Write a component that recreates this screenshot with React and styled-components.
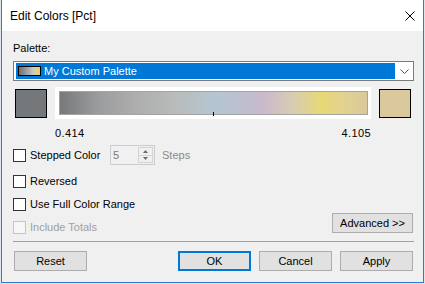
import React from "react";
import styled, { createGlobalStyle } from "styled-components";

const Global = createGlobalStyle`
  html, body { margin: 0; padding: 0; background: #dfe5ec; }
  * { box-sizing: border-box; }
`;

const Page = styled.div`
  width: 425px;
  height: 284px;
  padding-left: 1px;
  font-family: "Liberation Sans", Arial, sans-serif;
  font-size: 11px;
  color: #000;
`;

const Window = styled.div`
  width: 423px;
  height: 283px;
  border: 1px solid #2b7bd3;
  border-top: none;
  display: flex;
  flex-direction: column;
  background: #f0f0f0;
`;

const TitleBar = styled.div`
  height: 31px;
  flex: none;
  background: #fff;
  display: flex;
  align-items: center;
  justify-content: space-between;
  padding: 0 8px;
  font-size: 12px;
`;

const CloseIcon = styled.svg`
  width: 10px;
  height: 10px;
  display: block;
`;

const Body = styled.div`
  flex: 1;
  display: flex;
  flex-direction: column;
  padding: 11px 9px 12px 11px;
`;

const Label = styled.div`
  line-height: 13px;
  height: 13px;
`;

const Combo = styled.div`
  margin-top: 6px;
  height: 20px;
  border: 1px solid #7a7a7a;
  background: #fff;
  display: flex;
  padding: 1px 0 1px 2px;
`;

const Selection = styled.div`
  flex: 1;
  background: #0078d7;
  color: #fff;
  display: flex;
  align-items: center;
  padding-left: 2px;
`;

const MiniSwatch = styled.span`
  width: 23px;
  height: 10px;
  border: 1px solid #000;
  margin-right: 3px;
  background: linear-gradient(to right, #6e7072, #a8a8a8 45%, #c4c8cc 65%, #e4d47c 85%, #d9c99c);
`;

const ArrowBox = styled.div`
  width: 18px;
  display: flex;
  align-items: center;
  justify-content: center;
`;

const SwatchRow = styled.div`
  margin-top: 6px;
  display: flex;
  gap: 8px;
  padding: 0 2px;
`;

const ColorSwatch = styled.div`
  width: 32px;
  height: 29px;
  margin-top: 2px;
  border: 1px solid #000;
  background: ${(p) => p.$color};
`;

const GradientFrame = styled.div`
  width: 316px;
  height: 32px;
  background: #fff;
  padding: 4px 3px 4px 4px;
`;

const GradientBar = styled.div`
  position: relative;
  height: 100%;
  border: 1px solid #a4a4a4;
  background: linear-gradient(
    to right,
    #76787a 0%,
    #9a9b9c 12%,
    #aeaeae 25%,
    #b8bcbb 38%,
    #b5c6d1 50%,
    #bcc0d0 58%,
    #c9b9cc 66%,
    #d8ccb2 76%,
    #e7d876 85%,
    #e2d28e 92%,
    #d8c99c 100%
  );
`;

const Tick = styled.span`
  position: absolute;
  left: 153px;
  bottom: -2px;
  width: 1px;
  height: 4px;
  background: #000;
`;

const RangeRow = styled.div`
  margin-top: 8px;
  display: flex;
  justify-content: space-between;
  padding: 0 43px 0 42px;
  line-height: 13px;
  letter-spacing: 0.4px;
`;

const CheckRow = styled.div`
  margin-top: ${(p) => p.$mt || 0}px;
  height: ${(p) => p.$h || 13}px;
  display: flex;
  align-items: center;
`;

const CheckItem = styled.label`
  display: flex;
  align-items: center;
  gap: 4px;
  line-height: 13px;
  width: ${(p) => (p.$w ? `${p.$w}px` : "auto")};
  margin-top: ${(p) => p.$mt || 0}px;
  color: ${(p) => (p.$disabled ? "#a0a0a0" : "#000")};
`;

const Box = styled.span`
  width: 13px;
  height: 13px;
  flex: none;
  border: 1px solid ${(p) => (p.$disabled ? "#c4c4c4" : "#333")};
  background: ${(p) => (p.$disabled ? "#f7f7f7" : "#fff")};
`;

const SpinBox = styled.div`
  width: 45px;
  height: 20px;
  border: 1px solid #cccccc;
  display: flex;
  align-items: center;
  padding: 1px;
`;

const SpinValue = styled.span`
  flex: 1;
  padding-left: 1px;
  color: #7a7a7a;
`;

const SpinButtons = styled.div`
  width: 15px;
  height: 16px;
  border: 1px solid #d4d4d4;
  display: flex;
  flex-direction: column;
`;

const SpinHalf = styled.div`
  flex: 1;
  display: flex;
  align-items: center;
  justify-content: center;
  border-top: ${(p) => (p.$bottom ? "1px solid #d4d4d4" : "none")};
`;

const Steps = styled.span`
  margin-left: 7px;
  color: #8a8a8a;
`;

const OptionRow = styled.div`
  margin-top: 2px;
  display: flex;
  justify-content: space-between;
  align-items: flex-start;
`;

const Button = styled.button`
  width: ${(p) => p.$w || 73}px;
  height: 20px;
  padding: 0;
  margin: 0;
  font-family: inherit;
  font-size: 11px;
  color: #000;
  background: #e1e1e1;
  border: ${(p) => (p.$primary ? "2px solid #0078d7" : "1px solid #adadad")};
  margin-right: ${(p) => p.$mr || 0}px;
`;

const Separator = styled.div`
  margin-top: 7px;
  height: 1px;
  background: #a0a0a0;
`;

const ButtonRow = styled.div`
  margin-top: 9px;
  display: flex;
  gap: 8px;
  padding: 0 1px;
`;

const Spacer = styled.div`
  flex: 1;
`;

function Check({ label, disabled, w, mt }) {
  return (
    <CheckItem $disabled={disabled} $w={w} $mt={mt}>
      <Box $disabled={disabled} />
      <span>{label}</span>
    </CheckItem>
  );
}

export default function App() {
  return (
    <Page>
      <Global />
      <Window>
        <TitleBar>
          <span>Edit Colors [Pct]</span>
          <CloseIcon viewBox="0 0 10 10">
            <path d="M0.5 0.5 L9.5 9.5 M9.5 0.5 L0.5 9.5" stroke="#000" strokeWidth="1" fill="none" />
          </CloseIcon>
        </TitleBar>
        <Body>
          <Label>Palette:</Label>
          <Combo>
            <Selection>
              <MiniSwatch />
              <span>My Custom Palette</span>
            </Selection>
            <ArrowBox>
              <svg width="9" height="5" viewBox="0 0 9 5">
                <polyline points="0.5,0.5 4.5,4.5 8.5,0.5" stroke="#555" strokeWidth="1" fill="none" />
              </svg>
            </ArrowBox>
          </Combo>
          <SwatchRow>
            <ColorSwatch $color="#75787a" />
            <GradientFrame>
              <GradientBar>
                <Tick />
              </GradientBar>
            </GradientFrame>
            <ColorSwatch $color="#d9c99c" />
          </SwatchRow>
          <RangeRow>
            <span>0.414</span>
            <span>4.105</span>
          </RangeRow>
          <CheckRow $mt={5} $h={20}>
            <Check label="Stepped Color" w={97} />
            <SpinBox>
              <SpinValue>5</SpinValue>
              <SpinButtons>
                <SpinHalf>
                  <svg width="5" height="3" viewBox="0 0 5 3">
                    <polygon points="0,3 2.5,0 5,3" fill="#6a6a6a" />
                  </svg>
                </SpinHalf>
                <SpinHalf $bottom>
                  <svg width="5" height="3" viewBox="0 0 5 3">
                    <polygon points="0,0 2.5,3 5,0" fill="#6a6a6a" />
                  </svg>
                </SpinHalf>
              </SpinButtons>
            </SpinBox>
            <Steps>Steps</Steps>
          </CheckRow>
          <CheckRow $mt={10}>
            <Check label="Reversed" />
          </CheckRow>
          <CheckRow $mt={10}>
            <Check label="Use Full Color Range" />
          </CheckRow>
          <OptionRow>
            <Check label="Include Totals" disabled mt={8} />
            <Button $w={81} $mr={1}>Advanced &gt;&gt;</Button>
          </OptionRow>
          <Separator />
          <ButtonRow>
            <Button>Reset</Button>
            <Spacer />
            <Button $primary>OK</Button>
            <Button>Cancel</Button>
            <Button>Apply</Button>
          </ButtonRow>
        </Body>
      </Window>
    </Page>
  );
}
